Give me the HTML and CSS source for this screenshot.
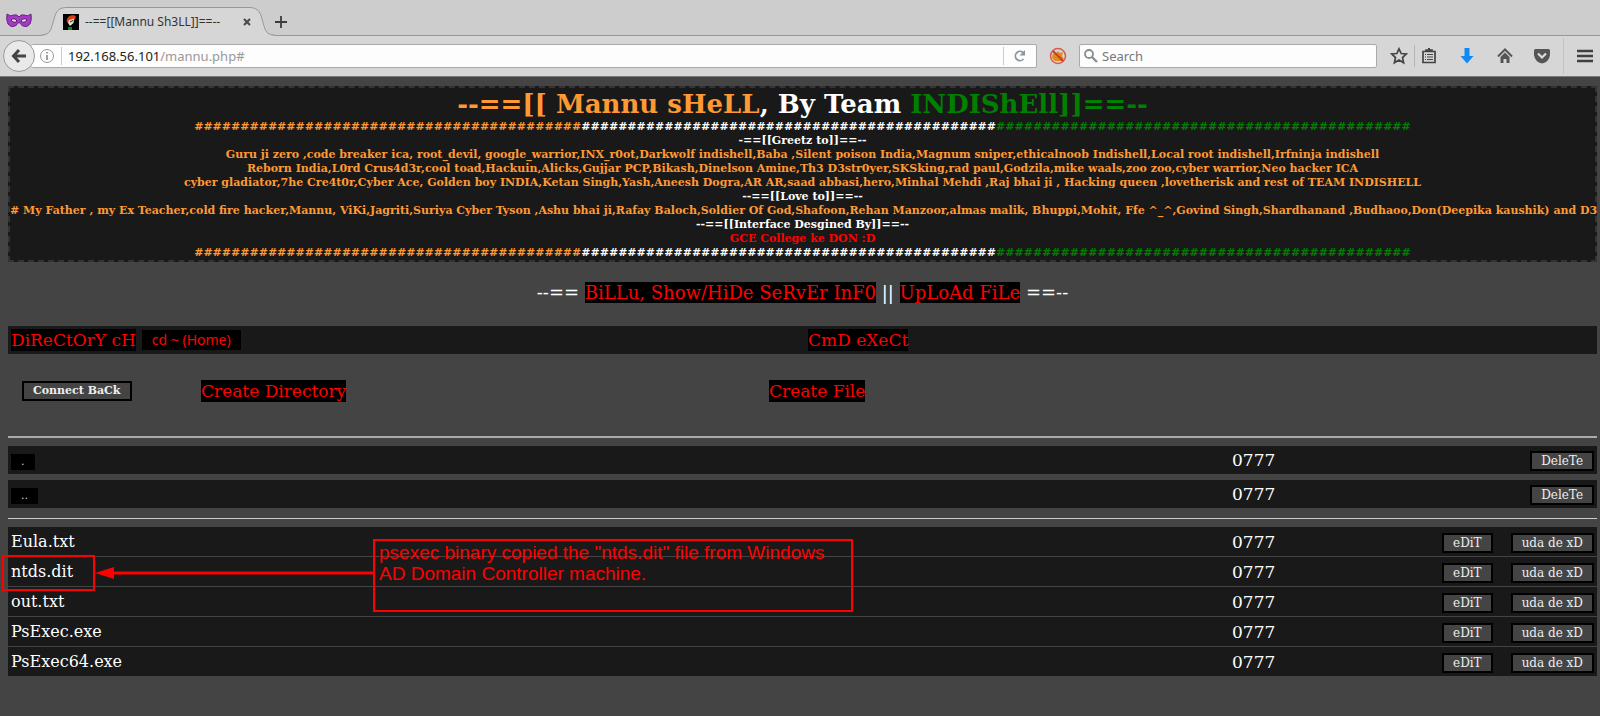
FILE: index.html
```html
<!DOCTYPE html>
<html lang="en">
<head>
<meta charset="utf-8">
<title>--==[[Mannu Sh3LL]]==--</title>
<link rel="stylesheet" href="styles.css">
</head>
<body>
<header class="browser">
  <div class="tabstrip">
    <svg class="mask" width="26" height="18" viewBox="0 0 26 18"><path d="M1 2Q4 5 8 3Q11 2 13 5Q15 2 18 3Q22 5 25 2Q26 8 24 12Q21 16 17 14Q15 13 13 10Q11 13 9 14Q5 16 2 12Q0 8 1 2Z" fill="#a03cc0" stroke="#6d1f88"/><path d="M5 8Q8 5 11 9Q8 12 5 8ZM21 8Q18 5 15 9Q18 12 21 8Z" fill="#e6d3ec" stroke="#5b1673"/></svg>
    <div class="tab">
      <svg class="tab-shape" width="234" height="29" viewBox="0 0 234 29"><path d="M0 28.5C10 28.5 10 22 13 12C15 4 18 .5 26 .5H208C216 .5 219 4 221 12C224 22 224 28.5 234 28.5V29H0Z" fill="#d6d6d6"/><path d="M0 28C10 28 10 22 13 12C15 4 18 .5 26 .5H208C216 .5 219 4 221 12C224 22 224 28 234 28" fill="none" stroke="#94989c"/></svg>
      <svg class="favicon" width="16" height="16" viewBox="0 0 16 16"><path d="M0 0h16v16H0z" fill="#000"/><path d="M4 5Q6 0 12 1.500Q14 4 11 6L7 5.500L5 9Q3 8 4 5Z" fill="#d8420e"/><path d="M6 6L11 4.500L10.500 9L7 12L5 9Z" fill="#e8ddd5"/><path d="M7 8l3-1.500" stroke="#222"/><path d="M5 13h4v3H5z" fill="#11851b"/></svg>
      <span class="tab-title">--==[[Mannu Sh3LL]]==--</span>
      <button class="plain" aria-label="Close tab"><svg width="8" height="8" viewBox="0 0 8 8"><path d="M1 1l6 6M7 1l-6 6" stroke="#4b4b4b" stroke-width="2.2"/></svg></button>
    </div>
    <button class="plain new-tab" aria-label="New tab"><svg width="12" height="12" viewBox="0 0 12 12"><path d="M6 0v12M0 6h12" stroke="#3c3c3c" stroke-width="1.8"/></svg></button>
  </div>
  <div class="toolbar">
    <button class="back" aria-label="Back"><svg width="16" height="16" viewBox="0 0 16 16"><path d="M8 2L2.500 8L8 14M3 8H15" fill="none" stroke="#444" stroke-width="3"/></svg></button>
    <div class="urlbar">
      <svg width="16" height="16" viewBox="0 0 16 16"><circle cx="8" cy="8" r="6.500" fill="none" stroke="#999"/><path d="M8 7v5M8 4v1.600" stroke="#888" stroke-width="1.600"/></svg>
      <i class="sep"></i>
      <div class="url">192.168.56.101<span>/mannu.php#</span></div>
      <i class="sep"></i>
      <button class="plain reload" aria-label="Reload"><svg width="14" height="14" viewBox="0 0 14 14"><path d="M10.500 10A4.600 4.600 0 1 1 10 3.500" fill="none" stroke="#8797a3" stroke-width="1.800"/><path d="M12 1v5.500H6.500z" fill="#8797a3"/></svg></button>
    </div>
    <svg class="blocker" width="18" height="18" viewBox="0 0 18 18"><path d="M4 6l2 1 3-3 2 2 3-1-1 4 2 3-3 2H6l-3-3z" fill="#e08a1a"/><circle cx="9" cy="9" r="7.500" fill="none" stroke="#d65a55" stroke-width="1.500"/><path d="M4 4l10 10" stroke="#c9382f" stroke-width="1.800"/></svg>
    <label class="search"><svg width="14" height="14" viewBox="0 0 14 14"><circle cx="5" cy="5" r="4" fill="none" stroke="#8b8b8b" stroke-width="1.800"/><path d="M8 8l5 5" stroke="#8b8b8b" stroke-width="2.200"/></svg><input type="text" placeholder="Search" aria-label="Search"></label>
    <div class="tools">
      <button class="plain" aria-label="Bookmark"><svg width="18" height="18" viewBox="0 0 18 18"><path d="M9 1.800L11.200 6.500L16.300 7L12.500 10.500L13.600 15.700L9 13L4.400 15.700L5.500 10.500L1.700 7L6.800 6.500Z" fill="none" stroke="#444" stroke-width="1.700"/></svg></button>
      <i class="sep"></i>
      <button class="plain" aria-label="Bookmarks list"><svg width="16" height="18" viewBox="0 0 16 18"><path d="M2 4.500h12v11H2zM5 4V3h6v1" fill="none" stroke="#444" stroke-width="1.700"/><path d="M7 1h2v2H7z" fill="#444"/><path d="M4 7.500h1M6 7.500h6M4 10h1M6 10h6M4 12.500h1M6 12.500h6" stroke="#444" stroke-width="1.200"/></svg></button>
      <button class="plain download" aria-label="Downloads"><svg width="16" height="18" viewBox="0 0 16 18"><path d="M5.500 1h5v8h4L8 16.500L1.500 9h4z" fill="#0f8af5"/></svg></button>
      <button class="plain home" aria-label="Home"><svg width="16" height="18" viewBox="0 0 16 18"><path d="M1 9.500L8 2.500L15 9.500" fill="none" stroke="#555" stroke-width="2"/><path d="M3.500 10L8 5.500L12.500 10v6H9.500v-4h-3v4h-3z" fill="#555"/></svg></button>
      <button class="plain pocket" aria-label="Pocket"><svg width="18" height="18" viewBox="0 0 18 18"><path d="M2.500 2h13Q17 2 17 3.500V8Q16 15 9 16.500Q2 15 1 8V3.500Q1 2 2.500 2Z" fill="#555"/><path d="M5 6.500l4 4 4-4" fill="none" stroke="#ddd" stroke-width="2.200"/></svg></button>
      <i class="sep tall"></i>
      <button class="plain menu" aria-label="Menu"><svg width="16" height="14" viewBox="0 0 16 14"><path d="M0 2h16M0 7h16M0 12h16" stroke="#3f3f3f" stroke-width="2.400"/></svg></button>
    </div>
  </div>
</header>

<main class="page">
  <section class="banner">
    <h1><span class="saffron">--==[[ Mannu sHeLL</span>, By Team <span class="green">INDIShEll]]==--</span></h1>
    <p><span class="saffron">##########################################</span>#############################################<span class="green">#############################################</span></p>
    <p>-==[[Greetz to]]==--</p>
    <p class="saffron">Guru ji zero ,code breaker ica, root_devil, google_warrior,INX_r0ot,Darkwolf indishell,Baba ,Silent poison India,Magnum sniper,ethicalnoob Indishell,Local root indishell,Irfninja indishell</p>
    <p class="saffron">Reborn India,L0rd Crus4d3r,cool toad,Hackuin,Alicks,Gujjar PCP,Bikash,Dinelson Amine,Th3 D3str0yer,SKSking,rad paul,Godzila,mike waals,zoo zoo,cyber warrior,Neo hacker ICA</p>
    <p class="saffron">cyber gladiator,7he Cre4t0r,Cyber Ace, Golden boy INDIA,Ketan Singh,Yash,Aneesh Dogra,AR AR,saad abbasi,hero,Minhal Mehdi ,Raj bhai ji , Hacking queen ,lovetherisk and rest of TEAM INDISHELL</p>
    <p>--==[[Love to]]==--</p>
    <p class="saffron"># My Father , my Ex Teacher,cold fire hacker,Mannu, ViKi,Jagriti,Suriya Cyber Tyson ,Ashu bhai ji,Rafay Baloch,Soldier Of God,Shafoon,Rehan Manzoor,almas malik, Bhuppi,Mohit, Ffe ^_^,Govind Singh,Shardhanand ,Budhaoo,Don(Deepika kaushik) and D3</p>
    <p>--==[[Interface Desgined By]]==--</p>
    <p class="red">GCE College ke DON :D</p>
    <p><span class="saffron">##########################################</span>#############################################<span class="green">#############################################</span></p>
  </section>

  <nav class="links">--== <a href="#">BiLLu, Show/HiDe SeRvEr InF0</a> || <a href="#">UpLoAd FiLe</a> ==--</nav>

  <div class="bar">
    <div class="directory"><a href="#">DiReCtOrY cH</a><button class="cd">cd ~ (Home)</button></div>
    <div><a href="#">CmD eXeCt</a></div>
  </div>

  <div class="actions">
    <button class="btn strong">Connect BaCk</button>
    <div><a href="#">Create Directory</a></div>
    <div><a href="#">Create File</a></div>
  </div>

  <hr class="thick">
  <table class="listing dirs">
    <tr><td><button class="dot">.</button></td><td class="perm">0777</td><td class="ops"><button class="btn">DeleTe</button></td></tr>
    <tr><td><button class="dot">..</button></td><td class="perm">0777</td><td class="ops"><button class="btn">DeleTe</button></td></tr>
  </table>
  <hr>
  <div class="files-wrap">
    <table class="listing files">
      <tr><td>Eula.txt</td><td class="perm">0777</td><td class="ops"><button class="btn">eDiT</button><button class="btn">uda de xD</button></td></tr>
      <tr><td>ntds.dit</td><td class="perm">0777</td><td class="ops"><button class="btn">eDiT</button><button class="btn">uda de xD</button></td></tr>
      <tr><td>out.txt</td><td class="perm">0777</td><td class="ops"><button class="btn">eDiT</button><button class="btn">uda de xD</button></td></tr>
      <tr><td>PsExec.exe</td><td class="perm">0777</td><td class="ops"><button class="btn">eDiT</button><button class="btn">uda de xD</button></td></tr>
      <tr><td>PsExec64.exe</td><td class="perm">0777</td><td class="ops"><button class="btn">eDiT</button><button class="btn">uda de xD</button></td></tr>
    </table>
    <div class="marker"></div>
    <svg class="arrow" width="280" height="12" viewBox="0 0 280 12"><path d="M0 6L19 0V4.500H280V7.500H19V12Z" fill="#f00"/></svg>
    <div class="note">psexec binary copied the "ntds.dit" file from Windows<br>AD Domain Controller machine.</div>
  </div>
</main>
</body>
</html>
```
FILE: styles.css
```css
* { box-sizing: border-box; }
body {
  margin: 0;
  min-height: 100vh;
  background: #444;
  color: #fff;
  font: 17px/20px "DejaVu Serif", serif;
}
svg { display: block; flex: none; }
button { font: inherit; cursor: pointer; }
.plain { border: 0; padding: 0; background: none; }

.browser {
  background: #d6d6d6;
  color: #333;
  font: 13px/18px "Noto Sans", sans-serif;
  border-bottom: 1px solid #777b78;
}
.tabstrip {
  display: flex;
  align-items: flex-end;
  height: 36px;
  background: #cdcdcd;
  box-shadow: inset 0 -1px #94989c;
}
.mask { margin: 0 9px 6px 6px; }
.tab {
  position: relative;
  display: flex;
  align-items: center;
  width: 234px;
  height: 29px;
  padding: 0 24px 0 22px;
}
.tab-shape { position: absolute; left: 0; bottom: 0; }
.favicon, .tab-title, .tab button { position: relative; }
.tab-title { flex: 1; margin-left: 6px; font-size: 12px; white-space: nowrap; }
.new-tab { margin: 0 0 8px; }
.toolbar { display: flex; align-items: center; height: 40px; padding: 0 7px 0 3px; }
.back {
  display: grid;
  place-items: center;
  width: 32px;
  height: 32px;
  padding: 0;
  border: 1px solid #999;
  border-radius: 50%;
  background: #e9e9e9;
  z-index: 1;
}
.urlbar, .search {
  display: flex;
  align-items: center;
  height: 24px;
  background: #fdfdfd;
  border: 1px solid #aaa;
  border-radius: 2px;
}
.urlbar { flex: 1; margin-left: -4px; padding-left: 8px; gap: 6px; border-left: 0; }
.url { flex: 1; color: #222; }
.url span { color: #999; }
.reload { padding: 0 9px 0 3px; }
.sep { width: 1px; height: 18px; background: #ccc; }
.blocker { margin: 0 12px; }
.search { width: 298px; padding: 0 4px; gap: 4px; }
.search input { flex: 1; min-width: 0; border: 0; padding: 0; background: none; font: inherit; outline: 0; }
.search input::placeholder { color: #777; opacity: 1; }
.tools { display: flex; align-items: center; margin-left: 13px; }
.tools .sep { margin: 0 6px; height: 22px; background: #b5b5b5; }
.download, .home { margin-left: 22px; }
.pocket { margin-left: 20px; }
.tools .tall { height: 36px; margin: 0 13px 0 12px; background: #c2c2c2; }

.page { padding: 9px 3px 0 8px; }
.banner {
  border: 2px dashed #333;
  background: #191919;
  text-align: center;
  font-weight: bold;
  white-space: nowrap;
}
.banner h1 { margin: 0; font-size: 26px; line-height: 32px; }
.banner p { margin: 0; font-size: 11px; line-height: 14px; }
.saffron { color: #f93; }
.green { color: #008000; }
.red { color: #f00; }

a { background: #000; color: #f00; text-decoration: none; padding: 1px 0; }
.links { margin-top: 21px; text-align: center; font-size: 18px; }
.links a { padding: 0; }
.bar {
  display: grid;
  grid-template-columns: 797px 1fr;
  align-items: center;
  height: 28px;
  margin-top: 23px;
  padding: 0 3px;
  background: #191919;
}
.directory { display: flex; align-items: center; gap: 6px; }
.cd {
  height: 20px;
  border: 0;
  padding: 0 10px;
  background: #000;
  color: #f00;
  font: 14px/20px "Noto Sans", sans-serif;
}
.actions {
  display: grid;
  grid-template-columns: 179px 568px 1fr;
  align-items: center;
  justify-items: start;
  height: 30px;
  margin: 22px 0 30px 14px;
}
.btn {
  height: 20px;
  border: 2px solid #000;
  padding: 0 9px;
  background: #444;
  color: #eee;
  font: 12px/16px "DejaVu Serif", serif;
}
.strong { font-size: 11px; font-weight: bold; }
hr { height: 1px; margin: 0; border: 0; background: #ccc; }
.thick { height: 2px; background: #aaa; }
.listing { width: 100%; table-layout: fixed; }
.listing tr { background: #191919; }
.listing td { padding: 0 3px; vertical-align: middle; }
.listing .perm { width: 202px; }
.listing .ops { width: 166px; text-align: right; }
.dirs { border-spacing: 0 6px; margin: 2px 0 4px; }
.dirs td { height: 28px; }
.files { border-spacing: 0 1px; font-size: 16px; }
.files .perm { font-size: 17px; }
.files td { height: 29px; }
.files .btn { margin-top: 3px; }
.files .btn + .btn { margin-left: 18px; }
.listing .btn, .dot { vertical-align: middle; }
.dot { height: 16px; border: 0; padding: 0 10px; background: #000; color: #ccc; font: 11px/16px "DejaVu Serif", serif; }

.files-wrap { position: relative; margin-top: 7px; }
.marker { position: absolute; left: -6px; top: 29px; width: 93px; height: 36px; border: 2px solid #f00; }
.arrow { position: absolute; left: 87px; top: 41px; }
.note {
  position: absolute;
  left: 365px;
  top: 13px;
  width: 480px;
  height: 73px;
  padding: 1px 4px;
  border: 2px solid #f00;
  color: #f00;
  font: 19px/21px "Liberation Sans", sans-serif;
  white-space: nowrap;
}
```
